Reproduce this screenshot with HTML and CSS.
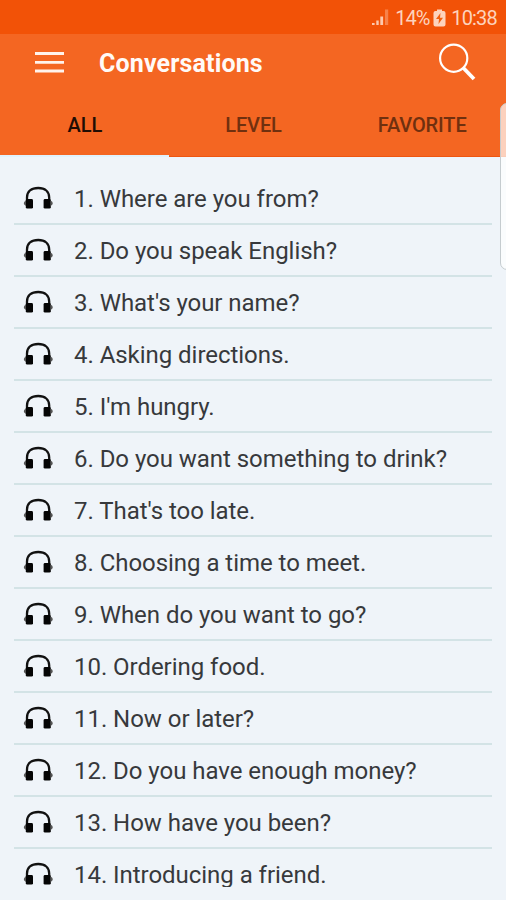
FILE: index.html
```html
<!DOCTYPE html>
<html lang="en">
<head>
    <meta charset="UTF-8">
    <meta name="viewport" content="width=device-width, initial-scale=1.0">
    <title>Conversations</title>
    <link rel="stylesheet" href="styles.css">
</head>
<body>

    <svg class="symbols">
        <symbol id="headphones" viewBox="0 0 30 24">
            <path d="M4 15 V11.5 C4 5.5 8.5 2 15.2 2 C22 2 26.2 5.5 26.2 11.5 V15" fill="none" stroke="#111" stroke-width="2.3"/>
            <rect x="2.8" y="13" width="7.2" height="9.6" rx="1.4" fill="#050505"/>
            <rect x="20.6" y="13" width="7.2" height="9.6" rx="1.4" fill="#050505"/>
            <path d="M3 14.5 Q0.8 15.5 0.8 17.2 Q0.8 19 3 20 Z M27.6 14.5 Q29.8 15.5 29.8 17.2 Q29.8 19 27.6 20 Z" fill="#555"/>
        </symbol>
    </svg>

    <div class="status-bar">
        <svg class="signal" width="18" height="18" viewBox="0 0 18 18">
            <rect x="1" y="14" width="2.6" height="2" fill="#fcc9ae"/>
            <rect x="5.3" y="11.5" width="2.4" height="4.5" fill="#fcc9ae"/>
            <rect x="9.3" y="7.5" width="2.8" height="8.5" fill="#fcc9ae"/>
            <rect x="14" y="0.5" width="3.2" height="15.5" fill="#f7824a"/>
        </svg>
        <span class="percent">14%</span>
        <svg class="battery" width="13" height="18" viewBox="0 0 13 18">
            <path d="M4 0.5 H9 V2 H10.5 Q12.5 2 12.5 4 V15.5 Q12.5 17.5 10.5 17.5 H2.5 Q0.5 17.5 0.5 15.5 V4 Q0.5 2 2.5 2 H4 Z" fill="#fdd3bd"/>
            <path d="M7.5 4 L3 10 H6 L5.5 15 L10 8.8 H7 Z" fill="#f2600f"/>
        </svg>
        <span class="time">10:38</span>
    </div>

    <div class="app-bar">
        <svg class="menu-icon" width="30" height="24" viewBox="0 0 30 24">
            <path d="M0 2.5 H29 M0 11.3 H29 M0 20 H29" stroke="#fff3ec" stroke-width="2.8"/>
        </svg>
        <h1 class="title">Conversations</h1>
        <svg class="search-icon" width="38" height="40" viewBox="0 0 38 40">
            <circle cx="15.7" cy="15.2" r="13.6" fill="none" stroke="#fff" stroke-width="2.2"/>
            <path d="M25.2 24.8 L36 36" stroke="#fff" stroke-width="3.8"/>
        </svg>
    </div>

    <div class="tabs">
        <div class="tab active">ALL</div>
        <div class="tab">LEVEL</div>
        <div class="tab">FAVORITE</div>
    </div>

    <div class="list">
        <div class="row"><svg class="icon"><use href="#headphones"/></svg><span>1. Where are you from?</span></div>
        <div class="row"><svg class="icon"><use href="#headphones"/></svg><span>2. Do you speak English?</span></div>
        <div class="row"><svg class="icon"><use href="#headphones"/></svg><span>3. What's your name?</span></div>
        <div class="row"><svg class="icon"><use href="#headphones"/></svg><span>4. Asking directions.</span></div>
        <div class="row"><svg class="icon"><use href="#headphones"/></svg><span>5. I'm hungry.</span></div>
        <div class="row"><svg class="icon"><use href="#headphones"/></svg><span>6. Do you want something to drink?</span></div>
        <div class="row"><svg class="icon"><use href="#headphones"/></svg><span>7. That's too late.</span></div>
        <div class="row"><svg class="icon"><use href="#headphones"/></svg><span>8. Choosing a time to meet.</span></div>
        <div class="row"><svg class="icon"><use href="#headphones"/></svg><span>9. When do you want to go?</span></div>
        <div class="row"><svg class="icon"><use href="#headphones"/></svg><span>10. Ordering food.</span></div>
        <div class="row"><svg class="icon"><use href="#headphones"/></svg><span>11. Now or later?</span></div>
        <div class="row"><svg class="icon"><use href="#headphones"/></svg><span>12. Do you have enough money?</span></div>
        <div class="row"><svg class="icon"><use href="#headphones"/></svg><span>13. How have you been?</span></div>
        <div class="row"><svg class="icon"><use href="#headphones"/></svg><span>14. Introducing a friend.</span></div>
    </div>

    <!-- edge panel handle -->
    <div class="edge-handle"></div>

</body>
</html>
```
FILE: styles.css
```css
* {
    box-sizing: border-box;
}

body {
    font-family: Roboto, sans-serif;
    margin: 0;
    height: 900px;
    position: relative;
    overflow: hidden;
    background: #eff4f9;
}

.symbols {
    display: none;
}

.status-bar {
    display: flex;
    align-items: center;
    justify-content: flex-end;
    height: 34px;
    padding: 1px 9px 0 0;
    background: #f25207;
    color: #fdd3bd;
    font-size: 20px;
}

.percent {
    width: 34px;
    margin-left: 6px;
    letter-spacing: -1px;
}

.battery {
    margin: 0 5px 0 4px;
}

.time {
    letter-spacing: -0.8px;
}

.app-bar {
    display: flex;
    align-items: center;
    height: 58px;
    padding: 0 30px 0 35px;
    background: #f46622;
}

.title {
    flex: 1;
    margin: 1px 0 0 34px;
    font-size: 25px;
    line-height: 30px;
    letter-spacing: 0.15px;
    font-weight: bold;
    color: #fffaf7;
}

.tabs {
    display: flex;
    height: 65px;
    background: #f46622;
    border-bottom: 1px solid #ee5510;
}

.tab {
    flex: 1;
    height: 65px;
    padding: 21px 0 0 1px;
    text-align: center;
    font-size: 20px;
    line-height: 24px;
    letter-spacing: -0.1px;
    font-weight: 500;
    color: #70300f;
}

.tab.active {
    color: #210d04;
    border-bottom: 2px solid #e0f2fc;
}

.list {
    height: 730px;
    padding: 16px 14px 0;
    overflow: hidden;
}

.row {
    display: flex;
    align-items: center;
    height: 52px;
    padding: 2px 0 0 9px;
    border-bottom: 2px solid #d3e3e6;
    font-size: 24px;
    letter-spacing: -0.04px;
    color: #37393c;
}

.row:last-child {
    padding-top: 0;
    border-bottom: none;
}

.icon {
    width: 30px;
    height: 24px;
    margin: -2px 21px 0 0;
}

.edge-handle {
    position: absolute;
    top: 103px;
    right: -8px;
    width: 14px;
    height: 167px;
    border: 1px solid #c5cccf;
    border-radius: 7px;
    background: rgba(255, 255, 255, 0.7);
}
```
